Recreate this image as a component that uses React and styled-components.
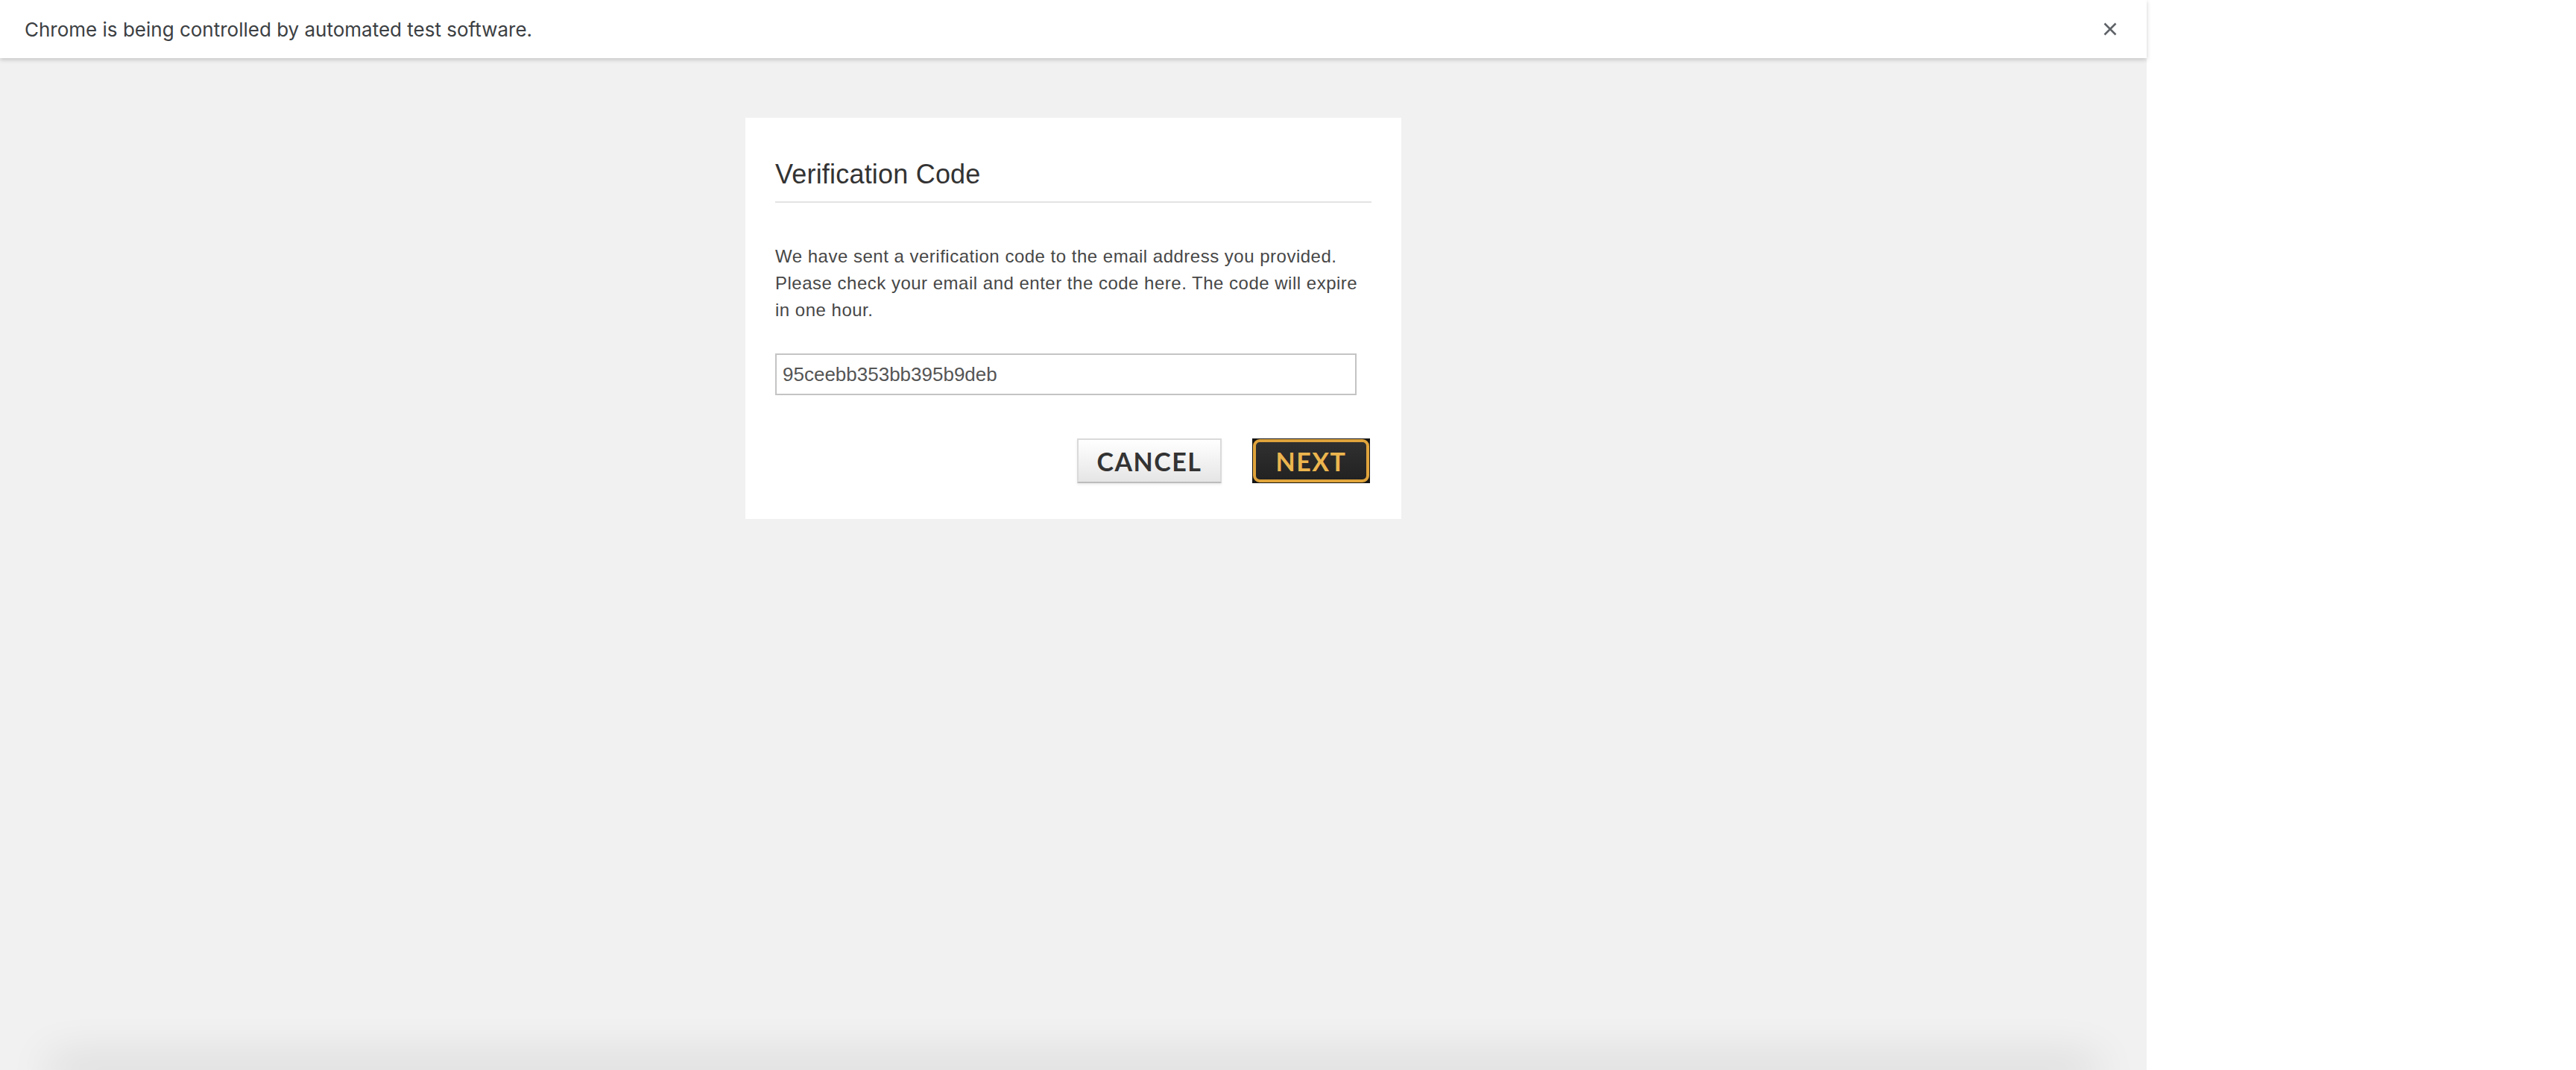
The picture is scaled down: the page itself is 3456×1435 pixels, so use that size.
import styled, { createGlobalStyle } from "styled-components";

const GlobalStyle = createGlobalStyle`
  html, body {
    margin: 0;
    padding: 0;
    background: #ffffff;
    overflow: hidden;
  }
`;

const Screen = styled.div`
  display: flex;
  width: 3456px;
  height: 1435px;
  background: #ffffff;
`;

const Browser = styled.div`
  display: flex;
  flex-direction: column;
  width: 2880px;
  height: 100%;
`;

const InfoBar = styled.div`
  position: relative;
  z-index: 1;
  display: flex;
  align-items: center;
  justify-content: space-between;
  height: 78px;
  padding: 0 39px 0 33px;
  background: #ffffff;
  box-shadow: 0 2px 6px rgba(0, 0, 0, 0.2);
  font-family: Inter, "Liberation Sans", sans-serif;
  font-size: 26px;
  color: #3c4043;
`;

const CloseButton = styled.button`
  display: flex;
  align-items: center;
  justify-content: center;
  width: 20px;
  height: 20px;
  padding: 0;
  border: 0;
  background: none;
`;

const Viewport = styled.div`
  flex: 1;
  display: flex;
  flex-direction: column;
  align-items: center;
  background: #f1f1f1;
  overflow: hidden;
`;

const Card = styled.div`
  width: 880px;
  margin-top: 80px;
  padding: 56px 40px 48px;
  box-sizing: border-box;
  background: #ffffff;
  font-family: "Liberation Sans", Arial, sans-serif;
`;

const Title = styled.h2`
  margin: 0;
  padding-bottom: 16px;
  border-bottom: 2px solid #e3e3e3;
  font-size: 36px;
  line-height: 40px;
  font-weight: normal;
  letter-spacing: 0.2px;
  color: #333333;
`;

const Message = styled.p`
  margin: 54px 0 0;
  font-size: 24px;
  line-height: 36px;
  letter-spacing: 0.5px;
  color: #474747;
`;

const CodeInput = styled.input`
  display: block;
  width: 780px;
  height: 56px;
  margin-top: 40px;
  padding: 0 8px;
  box-sizing: border-box;
  border: 2px solid #c4c4c4;
  border-radius: 0;
  outline: none;
  font-family: "Liberation Sans", Arial, sans-serif;
  font-size: 26px;
  color: #555555;
`;

const Actions = styled.div`
  display: flex;
  justify-content: flex-end;
  gap: 41px;
  margin-top: 58px;
  padding-right: 2px;
`;

const CancelButton = styled.button`
  width: 194px;
  height: 60px;
  padding: 0;
  box-sizing: border-box;
  border: 2px solid #dadada;
  border-bottom-color: #bcbcbc;
  background: linear-gradient(#ffffff, #e5e5e5);
  box-shadow: 0 2px 3px rgba(0, 0, 0, 0.08);
  font-family: Lato, "Liberation Sans", sans-serif;
  font-weight: 700;
  font-size: 34px;
  letter-spacing: 1.5px;
  color: #333333;
`;

const NextButton = styled.button`
  display: flex;
  width: 158px;
  height: 60px;
  padding: 1px;
  box-sizing: border-box;
  border: 0;
  background: #151515;
`;

const NextFace = styled.span`
  display: flex;
  align-items: center;
  justify-content: center;
  flex: 1;
  border: 4px solid #e0a43c;
  border-radius: 9px;
  background: linear-gradient(#303030, #222222);
  font-family: Lato, "Liberation Sans", sans-serif;
  font-weight: 700;
  font-size: 34px;
  letter-spacing: 1.5px;
  color: #ecb54e;
`;

const SheetEdge = styled.div`
  height: 0;
  margin-top: auto;
  align-self: stretch;
  margin-left: 80px;
  margin-right: 80px;
  box-shadow: 0 0 60px 14px rgba(0, 0, 0, 0.14);
`;

const App = () => {
  return (
    <Screen>
      <GlobalStyle />
      <Browser>
        <InfoBar>
          <span>Chrome is being controlled by automated test software.</span>
          <CloseButton aria-label="Close">
            <svg width="18" height="18" viewBox="0 0 18 18">
              <path d="M1.5 1.5 L16.5 16.5 M16.5 1.5 L1.5 16.5" stroke="#5f6368" strokeWidth="2.6" />
            </svg>
          </CloseButton>
        </InfoBar>
        <Viewport>
          <Card>
            <Title>Verification Code</Title>
            <Message>
              We have sent a verification code to the email address you provided.
              <br />
              Please check your email and enter the code here. The code will expire
              <br />
              in one hour.
            </Message>
            <CodeInput defaultValue="95ceebb353bb395b9deb" />
            <Actions>
              <CancelButton>CANCEL</CancelButton>
              <NextButton>
                <NextFace>NEXT</NextFace>
              </NextButton>
            </Actions>
          </Card>
          <SheetEdge />
        </Viewport>
      </Browser>
    </Screen>
  );
};

export default App;
